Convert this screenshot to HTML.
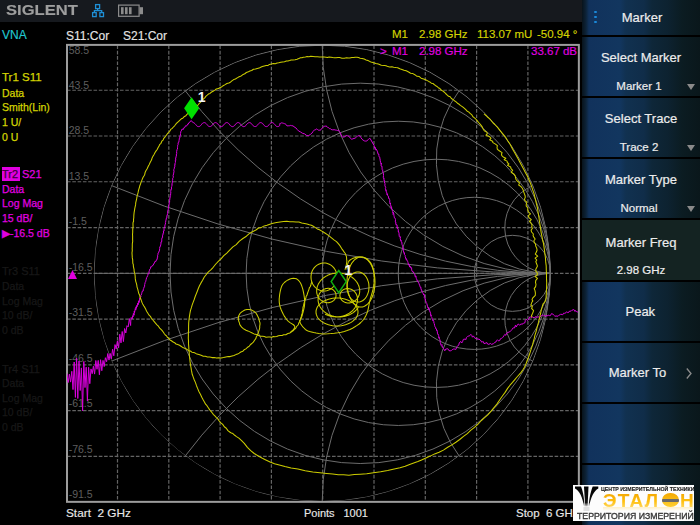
<!DOCTYPE html>
<html><head><meta charset="utf-8">
<style>
html,body{margin:0;padding:0;width:700px;height:525px;overflow:hidden;background:#000;}
body{position:relative;font-family:"Liberation Sans",sans-serif;}
.a{position:absolute;white-space:nowrap;line-height:1;-webkit-text-stroke:0.15px currentColor;}
#top{position:absolute;left:0;top:0;width:582px;height:22px;background:#16191e;}
#panel{position:absolute;left:582px;top:0;width:118px;height:525px;background:#000;}
.btn{position:absolute;left:0;width:118px;background:linear-gradient(to right,#08131b 0px,#0d2338 4px,#11325c 7px,#12365f 38px,#113150 44px,#102d49 62px,#0e2739 70px,#0d2230 86px,#0b1c22 100px,#0a171b 118px);}
.btn.sel{background:#142322;}
.bt{position:absolute;left:0;width:118px;text-align:center;color:#ececec;font-size:13px;line-height:1;-webkit-text-stroke:0.2px #ececec;}
.bs{position:absolute;left:0;width:118px;text-align:center;color:#ececec;font-size:11.5px;line-height:1;-webkit-text-stroke:0.2px #ececec;}
.tri{position:absolute;left:105px;width:0;height:0;border-left:4px solid transparent;border-right:4px solid transparent;border-top:6px solid #8a8a8a;}
.lab{position:absolute;left:2px;font-size:10.5px;line-height:1;white-space:nowrap;-webkit-text-stroke:0.25px currentColor;}
.ax{position:absolute;left:68.7px;font-size:10.5px;color:#5e5e5e;line-height:1;}
</style></head><body>
<div id="top"></div>
<div class="a" style="left:5.5px;top:3px;font-size:14.8px;font-weight:bold;color:#9e9e9e;transform:scaleX(1.12);transform-origin:0 0;">SIGLENT</div>
<svg style="position:absolute;left:0;top:0" width="160" height="22">
 <g fill="none" stroke="#1e8fd6" stroke-width="1.3">
  <rect x="95.6" y="4.6" width="4" height="4"/>
  <rect x="92.6" y="12.6" width="3.6" height="4"/>
  <rect x="99.9" y="12.6" width="3.6" height="4"/>
  <path d="M97.6 8.6 V10.6 M94.4 12.6 V10.6 H101.7 V12.6"/>
 </g>
 <g fill="none" stroke="#8c8c8c" stroke-width="1.2"><rect x="118.6" y="5.1" width="20.5" height="11.2"/></g>
 <g fill="#8c8c8c"><rect x="121" y="7.2" width="2.6" height="7"/><rect x="125" y="7.2" width="2.6" height="7"/><rect x="129" y="7.2" width="2.6" height="7"/><rect x="139.5" y="7.2" width="3.5" height="7"/></g>
</svg>

<div class="a" style="left:2px;top:29px;font-size:12px;color:#20c8d0;">VNA</div>
<div class="a" style="left:66px;top:30px;font-size:12px;color:#e4e4e4;">S11:Cor</div>
<div class="a" style="left:123px;top:30px;font-size:12px;color:#e4e4e4;">S21:Cor</div>

<div class="a" style="left:392px;top:29px;font-size:11.5px;color:#d4d400;">M1</div>
<div class="a" style="left:419px;top:29px;font-size:11.5px;color:#d4d400;">2.98 GHz</div>
<div class="a" style="left:477px;top:29px;font-size:11.5px;color:#d4d400;">113.07 mU</div>
<div class="a" style="left:537px;top:29px;font-size:11.5px;color:#d4d400;">-50.94 °</div>

<!-- left labels -->
<div class="lab" style="top:72px;font-size:11.5px;color:#d4d400;">Tr1 S11</div>
<div class="lab" style="top:88px;color:#d4d400;">Data</div>
<div class="lab" style="top:102px;color:#d4d400;">Smith(Lin)</div>
<div class="lab" style="top:117px;color:#d4d400;">1 U/</div>
<div class="lab" style="top:132px;color:#d4d400;">0 U</div>

<div style="position:absolute;left:2px;top:167px;width:18px;height:14px;background:#e000e0;"></div>
<div class="lab" style="top:169px;font-size:11px;color:#3a003a;">Tr2</div>
<div class="lab" style="left:22px;top:169px;font-size:11px;color:#e000e0;">S21</div>
<div class="lab" style="top:184px;color:#e000e0;">Data</div>
<div class="lab" style="top:198px;color:#e000e0;">Log Mag</div>
<div class="lab" style="top:213px;color:#e000e0;">15 dB/</div>
<div class="lab" style="top:228px;color:#e000e0;">&#9654;-16.5 dB</div>

<div class="lab" style="top:266px;font-size:11px;color:#171717;">Tr3 S11</div>
<div class="lab" style="top:281px;color:#171717;">Data</div>
<div class="lab" style="top:296px;color:#171717;">Log Mag</div>
<div class="lab" style="top:310px;color:#171717;">10 dB/</div>
<div class="lab" style="top:325px;color:#171717;">0 dB</div>

<div class="lab" style="top:364px;font-size:11px;color:#171717;">Tr4 S11</div>
<div class="lab" style="top:378px;color:#171717;">Data</div>
<div class="lab" style="top:393px;color:#171717;">Log Mag</div>
<div class="lab" style="top:407px;color:#171717;">10 dB/</div>
<div class="lab" style="top:422px;color:#171717;">0 dB</div>

<!-- axis labels -->
<div class="ax" style="top:44.8px;">58.5</div>
<div class="ax" style="top:79.8px;">43.5</div>
<div class="ax" style="top:124.8px;">28.5</div>
<div class="ax" style="top:170.8px;">13.5</div>
<div class="ax" style="top:215.8px;">-1.5</div>
<div class="ax" style="top:261.8px;">-16.5</div>
<div class="ax" style="top:306.8px;">-31.5</div>
<div class="ax" style="top:352.8px;">-46.5</div>
<div class="ax" style="top:397.8px;">-61.5</div>
<div class="ax" style="top:443.8px;">-76.5</div>
<div class="ax" style="top:488.8px;">-91.5</div>

<svg style="position:absolute;left:0;top:0" width="582" height="525">
 <defs><clipPath id="uc"><circle cx="322.5" cy="273" r="228.5"/></clipPath>
 <clipPath id="gb"><rect x="67" y="45" width="511" height="456"/></clipPath></defs>
 <g stroke="#646464" stroke-width="1.2" stroke-dasharray="3.6 1.7" fill="none">
<line x1="117.50" y1="45.5" x2="117.50" y2="501.0"/>
<line x1="168.80" y1="45.5" x2="168.80" y2="501.0"/>
<line x1="220.10" y1="45.5" x2="220.10" y2="501.0"/>
<line x1="271.40" y1="45.5" x2="271.40" y2="501.0"/>
<line x1="322.70" y1="45.5" x2="322.70" y2="501.0"/>
<line x1="374.00" y1="45.5" x2="374.00" y2="501.0"/>
<line x1="425.30" y1="45.5" x2="425.30" y2="501.0"/>
<line x1="476.60" y1="45.5" x2="476.60" y2="501.0"/>
<line x1="527.90" y1="45.5" x2="527.90" y2="501.0"/>
<line x1="67.0" y1="90.23" x2="578.0" y2="90.23"/>
<line x1="67.0" y1="136.00" x2="578.0" y2="136.00"/>
<line x1="67.0" y1="181.77" x2="578.0" y2="181.77"/>
<line x1="67.0" y1="227.54" x2="578.0" y2="227.54"/>
<line x1="67.0" y1="273.31" x2="578.0" y2="273.31"/>
<line x1="67.0" y1="319.08" x2="578.0" y2="319.08"/>
<line x1="67.0" y1="364.85" x2="578.0" y2="364.85"/>
<line x1="67.0" y1="410.62" x2="578.0" y2="410.62"/>
<line x1="67.0" y1="456.39" x2="578.0" y2="456.39"/>
 </g>
 <g stroke="#6c6c6c" stroke-width="1" fill="none" clip-path="url(#uc)">
<circle cx="322.2" cy="273.35" r="228.2"/>
<circle cx="360.23" cy="273.35" r="190.17"/>
<circle cx="398.27" cy="273.35" r="152.13"/>
<circle cx="436.30" cy="273.35" r="114.10"/>
<circle cx="474.33" cy="273.35" r="76.07"/>
<circle cx="512.37" cy="273.35" r="38.03"/>
<line x1="94.0" y1="273.35" x2="550.4" y2="273.35"/>
<path d="M550.4 273.35 A1141.00 1141.00 0 0 1 111.55 185.58"/>
<path d="M550.4 273.35 A1141.00 1141.00 0 0 0 111.55 361.12"/>
<path d="M550.4 273.35 A456.40 456.40 0 0 1 185.28 90.79"/>
<path d="M550.4 273.35 A456.40 456.40 0 0 0 185.28 455.91"/>
<path d="M550.4 273.35 A228.20 228.20 0 0 1 322.20 45.15"/>
<path d="M550.4 273.35 A228.20 228.20 0 0 0 322.20 501.55"/>
<path d="M550.4 273.35 A114.10 114.10 0 0 1 459.12 90.79"/>
<path d="M550.4 273.35 A114.10 114.10 0 0 0 459.12 455.91"/>
<path d="M550.4 273.35 A45.64 45.64 0 0 1 532.85 185.58"/>
<path d="M550.4 273.35 A45.64 45.64 0 0 0 532.85 361.12"/>
 </g>
 
 <rect x="67" y="44.9" width="511.85" height="456.95" fill="none" stroke="#9c9c9c" stroke-width="2"/>
 <g clip-path="url(#gb)" fill="none" stroke-linejoin="round">
<path d="M67.0 373.5 L68.2 382.5 L69.4 374.1 L70.6 382.1 L71.8 371.3 L73.0 389.6 L74.2 362.0 L75.4 397.4 L76.6 358.1 L77.8 398.5 L79.0 361.0 L80.2 390.5 L81.4 367.9 L82.6 410.9 L83.8 361.5 L85.0 387.6 L86.2 367.2 L87.4 401.0 L88.6 367.3 L89.8 383.7 L91.0 368.9 L92.2 373.7 L93.4 366.2 L94.6 374.1 L95.8 360.5 L97.0 369.3 L98.2 360.4 L99.4 374.8 L100.6 359.7 L101.8 370.7 L103.0 360.4 L104.2 366.6 L105.4 357.7 L106.6 361.7 L107.8 353.5 L109.0 360.1 L110.2 353.4 L111.4 358.8 L112.6 349.2 L113.8 355.8 L115.0 344.6 L116.2 349.1 L117.4 340.9 L118.6 347.8 L119.8 334.2 L121.0 342.9 L122.2 331.5 L123.4 341.6 L124.6 328.5 L125.8 333.0 L127.0 325.7 L128.2 326.9 L129.4 318.6 L130.6 325.5 L130.8 321.2 L131.2 317.5 L132.2 319.0 L132.7 315.7 L133.1 316.8 L133.4 313.4 L134.1 315.2 L134.3 311.0 L134.5 312.8 L135.3 308.5 L135.8 310.1 L136.0 306.8 L136.3 308.3 L136.8 305.4 L137.2 306.6 L137.7 303.1 L138.3 304.6 L138.5 300.8 L139.2 302.5 L139.7 298.2 L139.8 299.8 L140.2 297.1 L140.9 297.0 L140.8 295.3 L141.2 295.0 L141.8 293.2 L141.8 292.9 L142.4 291.0 L143.2 291.0 L143.3 288.9 L143.7 288.6 L144.2 286.7 L144.6 286.7 L144.6 284.6 L144.8 284.3 L145.2 282.4 L145.6 281.8 L146.0 280.1 L146.2 279.4 L146.6 277.6 L146.9 277.4 L147.7 275.5 L147.8 275.1 L148.3 273.4 L149.0 273.3 L149.1 271.1 L149.3 270.8 L149.8 269.1 L150.5 268.7 L150.7 266.8 L151.7 266.8 L152.4 265.4 L153.1 265.4 L154.0 263.2 L154.4 263.2 L155.0 261.3 L155.9 261.5 L156.5 259.7 L157.1 259.6 L157.4 257.2 L157.7 257.3 L157.6 255.2 L157.9 254.8 L158.0 253.1 L158.5 252.9 L159.2 250.9 L159.4 250.9 L159.7 248.7 L159.6 248.4 L159.9 246.6 L160.4 246.5 L160.8 244.3 L161.0 244.3 L160.9 242.1 L161.6 242.1 L161.8 240.0 L161.7 239.9 L162.0 237.6 L162.6 237.5 L162.5 235.3 L163.0 235.2 L162.9 233.5 L163.6 233.3 L163.4 231.0 L164.1 231.0 L164.0 228.9 L164.1 228.5 L164.8 226.7 L164.8 226.8 L165.0 224.4 L165.5 224.2 L165.4 222.4 L165.6 222.2 L165.9 220.2 L166.0 220.2 L166.4 218.0 L166.8 218.0 L166.9 215.5 L167.2 215.6 L167.5 213.8 L167.7 213.2 L167.6 211.2 L167.8 211.1 L168.3 209.1 L168.3 208.9 L168.6 206.8 L168.5 206.7 L168.7 204.8 L169.2 204.5 L169.2 202.4 L169.6 202.3 L169.6 200.3 L169.7 200.2 L169.9 198.0 L170.0 198.1 L170.3 195.7 L170.6 195.5 L170.6 193.4 L170.9 193.3 L170.7 191.5 L170.8 191.1 L171.0 189.1 L171.6 189.2 L171.4 186.9 L171.8 186.6 L172.1 184.6 L171.9 184.8 L172.2 182.6 L172.7 182.5 L172.4 180.4 L172.7 180.1 L172.7 178.2 L173.2 177.7 L173.3 176.0 L173.1 175.7 L173.6 173.7 L173.5 173.8 L174.1 171.3 L173.8 171.2 L173.9 169.2 L174.2 168.9 L174.5 166.9 L174.9 166.8 L174.7 164.7 L175.1 164.8 L175.0 162.9 L175.5 162.4 L175.3 160.2 L175.8 160.4 L175.6 158.1 L175.8 158.2 L176.2 156.1 L176.4 156.0 L176.4 154.0 L176.7 153.5 L176.6 151.8 L176.7 151.2 L177.1 149.5 L177.5 149.1 L177.5 147.3 L177.6 146.7 L177.7 145.2 L178.1 144.8 L178.1 142.7 L178.8 142.3 L179.0 140.5 L179.1 140.4 L179.4 138.1 L179.8 138.1 L179.9 135.7 L180.4 135.7 L180.5 133.6 L180.6 133.2 L180.9 131.2 L181.3 130.9 L182.0 129.1 L183.4 129.4 L183.9 127.7 L184.7 127.6 L185.5 125.8 L186.5 126.1 L187.7 124.1 L188.1 124.4 L189.0 122.5 L189.7 122.4 L190.8 120.7 L191.5 120.8 L192.9 122.6 L193.6 122.7 L194.3 123.1 L195.0 123.7 L195.7 124.5 L196.4 125.5 L197.1 126.1 L197.8 126.5 L198.5 126.6 L199.2 126.5 L199.9 126.2 L200.6 125.6 L201.3 124.8 L202.0 123.8 L202.7 123.1 L203.4 122.8 L204.1 122.6 L204.8 122.7 L205.5 123.0 L206.2 123.6 L206.9 124.4 L207.6 125.4 L208.3 126.0 L209.0 126.4 L209.7 126.6 L210.4 126.5 L211.1 126.2 L211.8 125.7 L212.5 124.9 L213.2 123.9 L213.9 123.2 L214.6 122.8 L215.3 122.6 L216.0 122.7 L216.7 123.0 L217.4 123.5 L218.1 124.2 L218.8 125.3 L219.5 125.9 L220.2 126.4 L220.9 126.6 L221.6 126.6 L222.3 126.3 L223.0 125.8 L223.7 125.0 L224.4 124.0 L225.1 123.3 L225.8 122.8 L226.5 122.6 L227.2 122.6 L227.9 122.9 L228.6 123.4 L229.3 124.1 L230.0 125.2 L230.7 125.9 L231.4 126.3 L232.1 126.6 L232.8 126.6 L233.5 126.3 L234.2 125.9 L234.9 125.2 L235.6 124.1 L236.3 123.4 L237.0 122.9 L237.7 122.6 L238.4 122.6 L239.1 122.8 L239.8 123.3 L240.5 124.0 L241.2 125.0 L241.9 125.8 L242.6 126.3 L243.3 126.6 L244.0 126.6 L244.7 126.4 L245.4 125.9 L246.1 125.3 L246.8 124.2 L247.5 123.5 L248.2 123.0 L248.9 122.7 L249.6 122.6 L250.3 122.8 L251.0 123.2 L251.7 123.9 L252.4 124.9 L253.1 125.7 L253.8 126.2 L254.5 126.5 L255.2 126.6 L255.9 126.4 L256.6 126.0 L257.3 125.4 L258.0 124.4 L258.7 123.6 L259.4 123.0 L260.1 122.7 L260.8 122.6 L261.5 122.8 L262.2 123.1 L262.9 123.8 L263.6 124.8 L264.3 125.6 L265.0 126.2 L265.7 126.5 L266.4 126.6 L267.1 126.5 L267.8 126.1 L268.5 125.5 L269.2 124.5 L269.9 123.7 L270.6 123.1 L271.3 122.7 L272.0 122.6 L272.7 122.7 L273.4 123.1 L274.1 123.7 L274.8 124.5 L275.5 125.5 L276.2 126.1 L276.9 126.5 L277.6 126.6 L278.3 126.5 L279.0 126.2 L279.7 125.6 L279.9 123.4 L280.5 123.4 L281.3 122.9 L282.4 123.0 L283.5 123.3 L284.4 123.6 L285.0 124.1 L285.4 124.0 L286.0 124.4 L286.4 125.4 L287.0 125.9 L288.2 125.8 L289.3 125.8 L290.3 125.4 L291.7 125.7 L293.0 125.9 L294.0 126.7 L295.0 127.4 L295.9 127.9 L297.1 129.4 L298.5 130.9 L300.4 131.9 L302.5 133.3 L304.6 133.9 L306.8 135.6 L308.6 135.6 L310.3 134.5 L311.9 133.2 L313.1 131.4 L314.6 129.8 L315.8 129.6 L316.7 128.9 L317.6 129.6 L318.5 130.2 L319.2 130.1 L319.9 130.4 L320.9 129.8 L321.7 128.5 L322.4 127.7 L323.5 127.1 L324.4 126.1 L325.2 126.2 L326.0 126.0 L327.0 126.5 L327.9 127.7 L328.5 127.7 L329.5 128.6 L330.2 128.4 L331.0 129.5 L331.9 129.6 L332.8 129.9 L334.1 129.7 L335.2 130.0 L336.5 130.2 L337.4 130.5 L338.6 130.1 L339.4 131.6 L340.4 132.9 L341.1 134.6 L342.0 136.5 L342.8 137.3 L343.8 136.8 L344.6 137.0 L345.4 136.0 L346.1 135.6 L347.2 135.7 L348.1 136.0 L349.2 136.5 L350.4 138.3 L351.7 139.2 L352.8 138.9 L354.0 138.4 L355.1 138.2 L356.4 137.0 L357.5 136.2 L358.7 135.6 L359.8 135.8 L360.9 137.6 L362.1 139.3 L363.1 140.1 L364.4 140.9 L365.5 141.1 L366.8 140.9 L368.3 139.5 L369.3 138.7 L370.0 138.3 L374.1 145.5 L374.6 148.2 L375.3 147.4 L376.0 150.2 L376.2 149.0 L376.5 149.8 L377.1 150.7 L377.5 151.9 L378.2 154.3 L378.8 154.1 L378.8 155.4 L379.0 155.9 L379.0 156.8 L379.9 157.4 L379.9 159.6 L380.4 159.7 L380.2 160.7 L380.6 162.2 L381.2 164.2 L381.4 163.2 L381.0 165.9 L381.9 166.3 L382.0 166.2 L382.1 169.4 L382.6 170.2 L383.0 169.8 L382.6 170.6 L383.1 172.9 L383.5 174.0 L383.5 175.1 L383.5 175.7 L383.3 177.2 L383.6 178.6 L384.1 178.2 L383.9 179.1 L384.4 181.2 L384.2 180.7 L384.6 183.0 L384.7 183.1 L385.0 183.7 L384.9 185.8 L385.6 187.2 L385.7 187.9 L385.4 188.4 L386.0 190.5 L385.9 189.8 L386.4 192.4 L386.7 192.3 L387.2 194.9 L387.3 193.8 L387.7 195.7 L388.3 196.1 L388.7 198.4 L388.9 198.1 L389.5 199.3 L389.8 200.1 L389.7 202.3 L390.0 203.8 L390.5 202.9 L390.5 204.4 L391.1 206.7 L391.0 206.3 L391.4 208.7 L391.6 207.4 L391.8 209.2 L392.7 211.4 L392.8 212.6 L393.3 212.0 L393.0 214.4 L393.7 213.2 L393.9 215.0 L394.0 215.9 L394.1 216.1 L394.4 217.9 L395.2 218.3 L395.5 219.5 L395.3 221.9 L395.9 222.0 L395.7 223.0 L396.2 225.1 L396.3 224.7 L397.1 224.9 L397.0 227.7 L397.6 226.9 L397.3 227.9 L398.2 229.4 L398.4 231.9 L398.4 231.4 L399.1 233.2 L398.9 234.4 L399.2 234.4 L399.2 236.5 L400.2 237.2 L400.5 236.7 L400.2 238.8 L401.0 240.9 L400.9 240.2 L401.2 241.8 L401.8 242.0 L402.0 244.4 L402.3 245.4 L402.4 245.4 L402.5 246.4 L403.1 246.7 L402.9 249.3 L403.3 248.7 L403.4 250.8 L403.9 252.8 L404.5 253.9 L404.4 252.7 L404.5 254.7 L405.2 255.5 L405.2 256.4 L405.7 258.0 L406.1 259.4 L406.3 258.7 L406.9 260.0 L407.2 261.1 L407.9 261.6 L408.0 262.6 L408.5 265.0 L409.3 264.6 L409.6 267.1 L410.2 266.2 L410.9 268.1 L411.6 267.7 L411.7 270.3 L412.4 271.5 L412.4 270.9 L412.9 271.5 L414.0 273.4 L414.5 273.8 L415.0 274.9 L415.0 276.6 L416.0 275.9 L416.1 278.1 L416.3 278.4 L416.7 279.0 L417.2 280.9 L417.9 280.9 L417.9 282.1 L418.8 282.7 L419.0 283.7 L419.7 285.5 L419.7 285.4 L420.3 287.4 L420.9 287.2 L421.0 289.6 L421.6 289.6 L422.0 292.1 L422.4 292.2 L422.9 292.8 L423.7 295.1 L423.8 294.1 L424.5 295.1 L424.3 297.7 L424.9 298.5 L425.2 299.6 L425.5 298.8 L425.5 300.7 L426.3 302.5 L426.2 302.7 L426.7 303.4 L426.9 303.8 L427.5 306.3 L427.5 306.2 L428.3 308.3 L428.2 307.3 L429.1 310.2 L429.0 309.0 L429.7 310.7 L430.0 312.2 L430.2 312.1 L430.6 313.2 L430.6 315.6 L431.3 315.0 L431.2 316.5 L431.8 317.4 L431.9 318.0 L432.7 320.5 L432.5 320.6 L433.4 320.3 L433.8 321.5 L434.0 323.5 L434.4 323.8 L434.6 325.5 L435.0 326.7 L435.5 327.2 L435.6 328.6 L436.3 328.7 L436.9 331.1 L437.1 330.6 L437.4 331.5 L437.4 333.2 L437.7 334.3 L438.3 334.3 L438.6 335.4 L439.0 338.1 L439.1 337.3 L439.4 339.1 L440.0 339.5 L440.3 342.6 L440.6 343.1 L440.6 344.5 L441.2 345.4 L441.9 344.4 L442.2 347.2 L442.1 346.8 L443.0 347.3 L443.5 348.5 L443.8 349.1 L444.8 350.8 L445.7 349.0 L447.1 348.9 L447.8 348.7 L449.0 350.7 L450.5 350.8 L451.2 350.7 L452.2 349.7 L453.6 349.0 L454.9 349.1 L455.8 349.5 L456.0 349.0 L457.0 346.7 L457.8 345.6 L458.5 345.5 L458.7 345.2 L459.3 342.9 L460.2 341.8 L461.1 341.7 L461.8 342.9 L462.6 341.6 L463.3 339.4 L464.0 339.2 L465.2 339.2 L465.9 339.7 L466.4 337.5 L467.6 336.4 L467.9 336.5 L468.8 335.9 L469.7 335.8 L470.8 334.3 L471.8 335.5 L472.4 337.2 L473.5 335.9 L474.4 337.7 L476.0 338.6 L476.7 337.9 L477.5 339.3 L479.0 339.1 L480.1 339.9 L481.2 341.1 L481.5 342.1 L482.3 341.8 L483.4 341.7 L484.0 343.6 L485.1 343.3 L486.9 342.6 L487.5 344.0 L488.9 344.4 L490.2 343.5 L490.8 343.5 L491.6 344.5 L493.1 343.7 L493.4 343.7 L494.9 342.4 L495.9 342.0 L496.5 340.6 L497.4 339.8 L498.4 340.9 L499.6 340.6 L500.6 338.6 L501.4 338.4 L502.3 337.9 L502.7 337.5 L503.9 335.8 L504.6 334.6 L504.8 334.4 L505.9 335.3 L506.6 333.1 L507.4 332.4 L507.7 333.1 L508.7 331.9 L509.6 331.9 L510.4 331.0 L511.4 330.4 L512.1 329.4 L513.1 327.8 L513.7 327.9 L514.5 328.0 L515.4 325.3 L516.3 327.0 L517.4 324.7 L518.1 324.0 L519.4 325.0 L520.3 324.8 L520.8 324.0 L521.9 324.1 L523.1 323.8 L523.5 323.2 L525.0 322.7 L525.3 320.3 L526.2 319.3 L527.6 320.5 L528.3 319.9 L529.2 318.0 L529.7 316.9 L531.2 317.1 L531.9 317.5 L532.8 316.9 L534.0 317.9 L535.1 316.8 L536.5 317.1 L537.5 317.3 L537.9 316.6 L539.3 317.4 L540.2 317.0 L541.3 315.7 L542.6 315.2 L543.5 315.2 L543.9 315.1 L545.5 316.8 L545.9 315.5 L547.3 316.0 L548.2 315.0 L549.3 315.6 L550.4 315.6 L551.5 313.6 L552.8 314.0 L553.5 314.9 L554.5 315.8 L556.0 316.3 L557.0 315.8 L557.9 316.4 L559.2 315.1 L560.2 314.4 L560.7 314.4 L562.1 314.4 L562.7 314.8 L563.6 313.2 L564.7 313.3 L565.9 312.8 L566.7 311.7 L567.6 312.6 L569.0 312.1 L569.6 311.1 L571.1 311.1 L571.7 310.5 L573.2 309.7 L573.8 309.5 L575.0 311.5 L575.5 310.5 L576.5 311.6 L577.5 311.9 L578.3 312.6 L579.6 314.5" stroke="#d800dc" stroke-width="1"/>
<path d="M483.9 114.0 L484.5 114.2 L485.5 115.2 L486.4 115.8 L487.4 117.0 L488.8 118.1 L490.5 119.7 L492.5 122.3 L494.8 124.5 L497.4 127.2 L499.9 130.3 L502.6 133.6 L505.3 136.8 L507.7 140.7 L510.2 144.5 L512.8 149.4 L515.3 153.7 L517.7 158.1 L519.8 162.0 L521.8 165.8 L523.7 169.3 L525.6 172.9 L527.3 176.0 L528.8 179.5 L530.3 182.9 L531.7 186.7 L532.7 189.9 L533.9 193.1 L534.8 196.9 L535.6 200.1 L536.5 204.1 L537.5 208.0 L538.1 212.5 L538.9 217.2 L539.5 221.7 L540.2 226.0 L540.8 230.3 L541.4 233.8 L542.1 237.2 L542.7 240.5 L543.4 243.0 L543.9 246.4 L544.4 249.9 L544.9 253.9 L545.4 257.5 L545.7 261.9 L546.2 265.9 L546.3 270.2 L546.5 273.8 L546.5 278.4 L546.7 282.7 L546.6 287.1 L546.4 291.6 L546.2 295.1 L546.1 298.2 L545.6 300.0 L545.1 301.2 L544.6 302.2 L544.0 302.9 L543.2 303.7 L542.7 305.0 L542.1 307.1 L541.6 308.6 L541.1 310.8 L540.7 313.0 L540.2 315.0 L539.7 317.6 L538.9 320.0 L538.5 322.4 L537.8 324.9 L537.2 326.9 L536.4 330.3 L535.8 332.5 L534.9 335.3 L534.2 338.7 L533.4 341.4 L532.6 344.9 L531.5 348.1 L530.5 351.2 L529.5 354.4 L528.4 357.7 L527.1 360.8 L525.9 364.1 L524.5 367.3 L522.9 369.8 L521.1 372.4 L519.1 374.7 L517.0 377.0 L514.8 379.6 L512.5 382.4 L510.0 385.2 L507.6 388.4 L505.1 392.4 L502.4 396.0 L499.8 399.8 L496.9 404.1 L493.8 407.8 L490.9 411.4 L487.8 414.8 L484.6 417.7 L481.4 420.5 L478.0 424.1 L474.5 427.4 L470.9 430.2 L467.3 433.6 L463.5 436.4 L459.7 439.5 L455.9 442.2 L451.9 444.9 L447.7 447.3 L443.4 450.1 L439.1 452.2 L434.6 453.9 L430.2 456.1 L425.9 458.1 L421.6 459.9 L417.9 461.5 L413.7 463.0 L409.6 464.5 L405.2 466.3 L400.0 467.8 L394.2 469.1 L387.6 470.5 L380.6 471.8 L373.6 472.7 L366.7 473.8 L360.3 474.2 L354.3 474.5 L348.9 475.3 L343.6 474.8 L338.3 474.8 L332.7 474.0 L326.7 473.5 L320.0 472.8 L312.8 472.1 L305.2 470.7 L297.9 469.1 L291.1 468.0 L284.9 466.5 L279.3 465.0 L274.5 463.8 L270.1 461.9 L265.8 459.9 L261.9 458.0 L257.9 455.7 L254.2 453.5 L250.7 450.6 L247.4 447.3 L244.3 443.4 L241.6 440.6 L238.9 438.1 L236.5 436.6 L234.7 435.3 L232.9 433.6 L231.3 433.0 L229.7 432.0 L227.9 430.6 L226.3 428.2 L224.3 426.8 L222.7 424.4 L220.9 422.8 L219.2 421.0 L217.7 418.6 L216.2 417.3 L214.9 415.9 L213.5 414.6 L212.3 413.0 L211.0 411.4 L209.7 409.9 L208.5 408.0 L207.0 405.7 L205.6 404.2 L204.4 401.9 L203.0 399.5 L201.8 397.2 L200.4 394.2 L199.0 391.7 L197.7 388.6 L196.5 385.7 L195.4 382.4 L194.2 379.8 L193.5 377.9 L192.9 376.2 L192.2 374.3 L191.9 372.6 L191.4 370.2 L191.1 368.2 L190.6 365.5 L190.1 361.9 L189.8 359.1 L189.4 355.7 L189.2 352.1 L188.9 349.3 L188.7 346.1 L188.5 343.7 L188.5 340.8 L188.3 338.3 L188.4 335.1 L188.4 332.7 L188.6 329.4 L188.6 326.2 L188.7 322.7 L189.0 319.9 L189.4 316.6 L189.9 313.5 L190.5 310.3 L191.4 307.7 L192.1 305.1 L193.2 302.1 L194.2 299.5 L195.2 296.5 L196.1 294.3 L197.3 291.2 L198.4 288.2 L199.6 285.5 L201.0 282.9 L202.6 280.3 L204.3 277.0 L206.3 274.5 L208.4 271.9 L210.8 269.9 L213.2 267.3 L215.8 264.0 L218.3 261.4 L221.0 258.9 L223.8 255.7 L226.8 253.1 L229.9 249.8 L232.9 246.9 L236.2 244.6 L239.4 241.1 L242.9 238.5 L246.4 236.2 L249.8 233.2 L253.0 231.5 L255.9 230.0 L258.6 228.0 L261.5 227.4 L264.2 225.9 L267.0 225.3 L269.9 224.2 L273.1 223.2 L276.6 222.6 L280.0 222.0 L283.5 221.5 L286.9 221.3 L289.9 221.7 L293.0 221.8 L296.1 222.0 L298.9 222.1 L301.7 223.0 L304.5 223.4 L307.0 223.9 L309.4 224.7 L311.4 225.3 L313.3 226.2 L315.4 227.6 L317.3 228.9 L319.5 229.8 L321.8 231.1 L324.5 232.7 L327.0 234.4 L329.7 236.4 L332.1 238.3 L334.3 240.1 L336.5 241.6 L338.3 243.7 L340.1 245.9 L341.7 248.6 L343.2 250.6 L344.2 252.1 L345.3 253.5 L345.9 255.2 L346.4 256.4 L346.6 258.0 L346.6 259.1 L346.9 260.9 L346.7 262.5 L346.5 264.0 L346.1 265.7 L345.6 267.8 L345.3 268.8 L344.9 269.7" stroke="#cccc00" stroke-width="1.05"/><path d="M312.1 282.0 L311.2 283.4 L310.8 285.3 L310.2 286.7 L309.3 287.9 L308.9 289.6 L308.3 291.1 L307.6 293.0 L307.0 295.1 L306.2 296.2 L305.8 298.3 L305.2 299.8 L304.4 302.0 L304.0 303.3 L303.6 305.4 L303.0 307.3 L302.9 309.2 L302.3 311.3 L302.3 313.3 L301.6 315.0 L301.2 316.9 L300.5 318.6 L300.5 319.9 L299.7 321.5 L298.8 323.0 L298.1 325.0 L296.6 326.5 L295.6 328.5 L294.3 329.3 L293.4 330.6 L291.4 331.9 L290.0 332.9 L287.9 333.5 L285.8 334.7 L283.6 334.7 L282.1 335.4 L280.2 335.6 L278.4 335.8 L276.7 336.6 L274.7 336.7 L273.4 336.5 L271.8 337.2 L269.9 336.9 L268.2 337.0 L266.0 337.2 L264.4 336.5 L262.4 336.2 L260.8 336.2 L259.3 335.7 L257.6 335.1 L255.5 334.3 L254.0 333.9 L251.7 332.8 L249.9 331.9 L247.8 330.9 L246.0 330.2 L243.9 329.0 L243.0 328.3 L241.6 327.1 L239.8 324.6 L239.3 322.5 L238.7 321.1 L238.3 318.1 L238.6 316.0 L240.0 313.4 L242.1 311.6 L244.8 310.0 L246.9 309.5 L249.1 309.5 L251.8 310.1 L253.7 311.2 L255.7 312.7 L257.1 314.9 L258.6 317.9 L259.0 319.3 L259.4 321.1 L260.0 322.8 L260.0 324.4 L259.7 326.2 L259.7 327.8 L259.3 329.6 L258.7 331.3 L258.0 333.3 L257.4 335.2 L256.3 336.8 L255.9 338.4 L254.6 340.2 L253.3 342.1 L251.9 343.5 L250.5 344.5 L249.3 346.1 L247.3 347.5 L245.9 348.9 L244.1 349.8 L242.9 351.2 L240.8 352.0 L239.2 353.1 L237.6 354.1 L235.9 354.6 L234.0 355.5 L232.1 355.9 L230.1 356.6 L228.1 356.6 L225.9 356.9 L223.5 357.6 L221.1 358.0 L218.8 357.7 L216.6 358.1 L214.2 357.6 L211.9 357.6 L209.8 357.1 L207.5 357.0 L205.3 356.3 L203.3 356.2 L201.1 355.3 L198.9 354.6 L196.9 354.1 L195.2 353.1 L193.7 352.6 L191.9 352.2 L190.4 351.0 L188.6 350.7 L186.9 349.3 L185.7 348.8 L184.3 348.1 L182.6 347.4 L181.0 346.3 L179.5 345.3 L177.7 344.6 L176.0 344.0 L174.6 342.7 L172.7 341.7 L171.4 340.8 L170.0 340.0 L169.0 338.5 L167.5 337.4 L166.6 335.9 L165.3 335.0 L164.0 333.3 L163.4 332.3 L162.0 330.4 L161.0 329.3 L159.7 328.1 L158.4 326.2 L156.7 324.6 L155.5 323.2 L154.0 321.3 L152.9 320.0 L151.5 318.6 L150.4 316.3 L149.1 315.1 L147.9 313.3 L146.6 311.2 L145.9 309.6 L144.8 307.4 L143.7 305.8 L142.7 303.9 L141.9 302.2 L141.1 299.8 L140.1 297.5 L139.7 295.3 L138.7 293.2 L138.3 291.5 L137.8 289.3 L137.0 286.8 L136.8 285.1 L136.4 283.4 L135.8 281.6 L135.3 278.9 L135.1 275.5 L134.6 272.5 L134.1 271.3 L134.1 269.7 L133.7 267.9 L133.3 265.9 L133.4 264.9 L132.8 263.3 L132.7 259.9 L132.3 257.9 L132.2 256.0 L132.0 253.0 L132.3 250.6 L132.2 248.9 L132.3 247.0 L132.3 244.8 L132.4 243.1 L132.7 241.4 L132.6 239.4 L132.6 237.8 L132.6 235.8 L132.5 234.5 L132.7 232.3 L132.7 230.5 L132.8 228.4 L133.1 226.7 L133.0 225.1 L133.0 222.8 L133.6 221.0 L133.5 219.8 L133.8 217.5 L133.8 216.2 L133.9 214.6 L134.1 212.7 L134.5 210.3 L134.8 208.3 L135.2 206.5 L135.6 204.9 L135.7 202.9 L136.1 201.1 L136.6 199.2 L136.8 197.8 L137.1 196.2 L137.6 194.4 L138.1 192.4 L138.5 190.5 L138.8 189.4 L139.4 187.5 L139.8 185.7 L140.5 184.0 L141.1 182.0 L141.8 180.4 L142.3 179.1 L143.1 177.2 L144.1 175.8 L144.8 174.2 L145.2 172.2 L145.9 170.8 L147.0 169.0 L147.6 167.7 L148.5 165.8 L149.3 164.4 L150.0 162.8 L150.5 161.8 L151.5 160.1 L152.1 157.9 L153.1 156.1 L154.1 154.4 L154.9 152.7 L156.1 150.9 L157.2 149.5 L158.0 147.7 L158.9 146.4 L159.8 144.3 L161.0 143.3 L161.8 141.2 L163.1 140.1 L163.8 138.3 L164.9 137.2 L166.0 135.7 L167.4 133.7 L168.5 132.5 L169.7 131.3 L170.7 129.4 L172.2 128.3 L173.4 127.0 L174.6 125.8 L175.8 124.2 L176.8 123.0 L178.4 121.7 L180.0 120.1 L181.3 118.8 L182.8 118.2 L184.0 116.8 L185.9 115.7 L187.2 114.2 L188.4 113.2 L190.1 111.9 L191.4 110.7 L193.0 109.9 L194.2 108.4 L195.5 107.3 L197.0 106.1 L197.9 105.2 L198.9 103.8 L200.1 102.7 L201.3 101.5 L202.3 100.2 L203.6 98.8 L204.8 97.9 L205.8 96.4 L207.2 95.2 L208.4 94.1 L210.0 93.4 L211.6 92.0 L213.1 91.2 L214.8 90.1 L216.3 89.0 L218.4 88.6 L219.7 87.7 L221.9 86.7 L223.2 85.7 L225.1 84.6 L226.9 83.5 L228.8 83.0 L230.4 82.2 L232.2 80.7 L233.7 79.6 L235.4 79.0 L237.6 77.6 L239.1 76.8 L241.2 75.9 L242.6 74.8 L244.8 73.8 L246.3 72.5 L248.4 71.7 L249.9 71.0 L251.7 70.5 L253.4 69.3 L255.4 69.0 L257.3 68.5 L259.1 68.1 L260.7 67.2 L262.3 66.5 L264.3 65.9 L266.1 65.4 L267.8 65.6 L269.4 64.4 L271.4 64.1 L273.4 63.5 L275.3 63.7 L277.1 63.0 L278.7 62.8 L280.7 62.3 L282.5 61.9 L284.5 61.8 L286.4 61.1 L287.9 60.9 L289.7 60.5 L291.1 60.0 L292.8 60.0 L295.1 59.8 L297.1 59.3 L298.8 58.6 L300.4 57.7 L301.9 57.7 L303.3 57.2 L305.4 56.9 L307.1 56.5 L308.9 56.8 L310.8 56.2 L313.2 56.5 L315.1 56.7 L317.4 56.8 L319.7 56.9 L322.0 56.9 L324.1 56.9 L326.1 57.2 L327.4 57.5 L329.1 57.0 L331.0 57.2 L332.7 57.5 L334.4 57.7 L336.0 57.7 L338.0 57.5 L339.6 57.6 L341.9 58.2 L344.3 58.2 L346.4 57.7 L348.5 58.0 L349.8 58.0 L351.8 57.4 L353.7 57.6 L355.3 57.2 L357.0 57.3 L358.5 57.6 L360.2 58.2 L362.1 58.4 L364.2 59.1 L366.1 59.9 L367.9 60.5 L369.7 61.4 L371.0 61.9 L372.8 62.5 L375.9 63.5 L378.3 64.0 L381.3 65.2 L384.4 65.4 L386.1 65.7 L387.9 66.6 L389.7 66.9 L391.9 66.7 L393.7 67.2 L396.1 67.6 L397.7 67.7 L399.8 68.8 L401.9 69.4 L404.0 70.2 L406.2 70.8 L408.6 72.0 L410.6 73.2 L412.9 73.6 L414.8 74.7 L417.0 76.3 L419.3 76.6 L421.1 78.2 L423.6 78.9 L425.6 79.7 L427.3 80.6 L428.7 81.4 L429.8 81.9 L431.3 83.2 L432.9 83.4 L434.1 84.5 L435.7 85.7 L437.1 86.5 L438.3 87.7 L439.9 88.5 L441.4 90.3 L442.6 90.9 L444.4 92.2 L445.6 93.5 L447.0 94.8 L448.6 96.3 L450.2 96.8 L451.4 98.5 L453.1 99.6 L454.4 100.7 L455.8 101.6 L457.5 103.2 L459.1 104.2 L460.3 105.4 L461.9 106.4 L463.3 107.4 L464.7 108.6 L465.8 109.7 L467.2 111.2 L468.6 111.9 L470.1 113.4 L471.9 114.9 L473.1 116.9 L474.8 118.1 L476.2 119.5 L477.3 120.9 L478.6 122.5 L480.1 124.2 L481.3 125.6 L482.5 127.4 L483.0 128.7 L484.3 130.8 L486.7 132.1 L487.4 133.6 L486.0 135.2 L489.8 136.8 L491.0 138.3 L489.6 139.8 L492.6 141.2 L492.9 142.6 L495.5 144.1 L497.4 145.7 L497.0 147.5 L497.4 149.4 L499.6 151.0 L502.1 152.6 L501.5 154.2 L501.8 155.6 L503.2 157.0 L505.8 158.3 L504.2 159.7 L507.1 161.1 L507.3 162.5 L508.9 163.9 L507.5 165.3 L510.7 167.0 L511.0 168.6 L512.7 170.3 L511.2 172.3 L514.1 174.2 L515.2 175.9 L515.5 177.5 L515.9 179.2 L517.1 180.9 L519.5 182.9 L518.7 185.0 L521.0 186.7 L522.5 188.5 L523.2 190.2 L523.8 192.1 L524.5 194.1 L525.2 196.0 L525.2 197.6 L524.5 199.1 L524.9 200.6 L526.9 202.1 L526.3 204.1 L526.2 206.0 L527.8 208.0 L527.7 209.9 L528.4 211.8 L530.5 213.8 L528.3 215.7 L529.0 217.6 L531.3 219.6 L529.5 221.4 L531.0 223.2 L532.1 225.1 L531.7 226.7 L532.4 228.4 L531.1 230.0 L531.6 232.0 L533.4 234.0 L533.1 235.7 L534.0 237.4 L535.2 239.0 L534.0 240.5 L534.1 242.3 L535.5 244.0 L535.7 246.0 L536.6 247.9 L537.1 250.0 L536.4 252.1 L535.3 254.1 L537.7 256.2 L535.1 258.1 L536.8 260.0 L535.8 261.6 L536.4 263.2 L537.5 266.1 L535.8 269.2 L535.8 271.1 L537.3 273.0 L537.3 274.8 L535.1 276.5 L537.5 278.3 L535.8 280.4 L535.5 282.4 L536.0 284.5 L535.6 286.6 L534.2 288.6 L535.0 290.6 L535.4 292.9 L535.3 295.3 L532.6 298.1 L532.0 299.8 L532.8 300.9 L531.9 302.2 L531.4 303.7 L530.8 305.1 L532.4 306.6 L531.6 308.3 L533.6 310.6 L532.6 313.2 L531.5 315.7 L531.8 317.4" stroke="#cccc00" stroke-width="1.05"/><path d="M290.0 332.9 L290.7 332.2 L291.7 331.2 L292.9 330.1 L294.0 328.9 L294.7 327.6 L294.8 326.5 L294.2 325.5 L293.1 324.5 L291.6 323.6 L290.0 322.6 L288.4 321.4 L287.0 320.0 L285.8 318.3 L284.5 316.4 L283.3 314.3 L282.2 312.1 L281.3 310.0 L280.5 308.0 L279.9 306.1 L279.6 304.3 L279.3 302.6 L279.2 300.8 L279.2 298.9 L279.4 297.0 L279.6 294.9 L280.0 292.5 L280.5 290.2 L281.1 287.9 L281.9 285.8 L283.0 284.0 L284.4 282.5 L286.1 281.1 L288.0 279.9 L290.0 279.0 L291.8 278.4 L293.5 278.2 L295.0 278.4 L296.4 278.8 L297.7 279.6 L298.9 280.8 L300.0 282.2 L301.0 284.0 L301.9 286.3 L302.8 289.1 L303.5 292.3 L304.1 295.6 L304.5 298.8 L304.7 301.7 L304.6 304.4 L304.3 307.0 L303.7 309.6 L303.1 312.0 L302.5 314.2 L302.0 316.0 L301.5 317.4 L301.0 318.4 L300.4 319.2 L300.0 319.9 L299.7 320.6 L299.7 321.5 L300.0 322.6 L300.6 323.7 L301.4 324.9 L302.2 326.0 L303.1 327.1 L304.0 328.0 L304.8 328.8 L305.4 329.4 L306.1 330.0 L307.0 330.5 L308.1 331.0 L309.6 331.5 L311.5 332.0 L313.7 332.6 L316.2 333.1 L318.8 333.5 L321.6 333.8 L324.5 333.9 L327.6 333.8 L330.9 333.6 L334.4 333.3 L337.9 332.8 L341.2 332.2 L344.3 331.4 L347.1 330.5 L349.9 329.4 L352.5 328.2 L354.9 326.8 L357.1 325.4 L359.1 324.0 L360.8 322.5 L362.3 321.0 L363.6 319.5 L364.7 317.8 L365.7 316.0 L366.6 314.1 L367.4 312.0 L368.0 309.8 L368.5 307.4 L369.0 305.0 L369.4 302.5 L370.0 300.0 L370.7 297.4 L371.5 294.8 L372.3 292.1 L373.0 289.4 L373.6 286.7 L374.0 284.0 L374.2 281.3 L374.2 278.4 L374.1 275.6 L373.9 272.8 L373.5 270.3 L373.0 268.0 L372.3 266.0 L371.5 264.2 L370.5 262.6 L369.4 261.2 L368.2 260.0 L367.0 259.0 L365.7 258.2 L364.2 257.6 L362.7 257.2 L361.1 257.0 L359.5 256.9 L358.0 257.0 L356.4 257.3 L354.7 257.7 L353.1 258.3 L351.5 259.1 L350.1 260.0 L349.0 261.0 L348.2 262.3 L347.7 263.8 L347.3 265.5 L347.1 267.1 L347.0 268.5 L346.8 269.5" stroke="#cccc00" stroke-width="1.05"/><path d="M337.0 277.0 L336.9 278.5 L336.7 279.9 L336.4 281.3 L335.9 282.7 L335.3 284.0 L334.5 285.2 L333.7 286.4 L332.7 287.4 L331.6 288.3 L330.5 289.1 L329.3 289.8 L328.0 290.3 L326.7 290.7 L325.4 290.9 L324.0 291.0 L322.6 290.9 L321.3 290.7 L320.0 290.3 L318.7 289.8 L317.5 289.1 L316.4 288.3 L315.3 287.4 L314.3 286.4 L313.5 285.2 L312.7 284.0 L312.1 282.7 L311.6 281.3 L311.3 279.9 L311.1 278.5 L311.0 277.0 L311.1 275.5 L311.3 274.1 L311.6 272.7 L312.1 271.3 L312.7 270.0 L313.5 268.8 L314.3 267.6 L315.3 266.6 L316.4 265.7 L317.5 264.9 L318.7 264.2 L320.0 263.7 L321.3 263.3 L322.6 263.1 L324.0 263.0 L325.4 263.1 L326.7 263.3 L328.0 263.7 L329.3 264.2 L330.5 264.9 L331.6 265.7 L332.7 266.6 L333.7 267.6 L334.5 268.8 L335.3 270.0 L335.9 271.3 L336.4 272.7 L336.7 274.1 L336.9 275.5 L337.0 277.0" stroke="#cccc00" stroke-width="1.05"/><path d="M375.0 282.0 L374.9 284.6 L374.7 287.2 L374.3 289.7 L373.8 292.2 L373.1 294.5 L372.3 296.7 L371.4 298.7 L370.4 300.6 L369.2 302.2 L368.0 303.7 L366.7 304.8 L365.3 305.8 L363.9 306.5 L362.5 306.9 L361.0 307.0 L359.5 306.9 L358.1 306.5 L356.7 305.8 L355.3 304.8 L354.0 303.7 L352.8 302.2 L351.6 300.6 L350.6 298.7 L349.7 296.7 L348.9 294.5 L348.2 292.2 L347.7 289.7 L347.3 287.2 L347.1 284.6 L347.0 282.0 L347.1 279.4 L347.3 276.8 L347.7 274.3 L348.2 271.8 L348.9 269.5 L349.7 267.3 L350.6 265.3 L351.6 263.4 L352.8 261.8 L354.0 260.3 L355.3 259.2 L356.7 258.2 L358.1 257.5 L359.5 257.1 L361.0 257.0 L362.5 257.1 L363.9 257.5 L365.3 258.2 L366.7 259.2 L368.0 260.3 L369.2 261.8 L370.4 263.4 L371.4 265.3 L372.3 267.3 L373.1 269.5 L373.8 271.8 L374.3 274.3 L374.7 276.8 L374.9 279.4 L375.0 282.0" stroke="#cccc00" stroke-width="1.05"/><path d="M369.0 287.0 L368.9 288.6 L368.8 290.1 L368.5 291.6 L368.0 293.1 L367.5 294.5 L366.9 295.8 L366.2 297.0 L365.4 298.1 L364.5 299.1 L363.5 300.0 L362.5 300.7 L361.4 301.3 L360.3 301.7 L359.1 301.9 L358.0 302.0 L356.9 301.9 L355.7 301.7 L354.6 301.3 L353.5 300.7 L352.5 300.0 L351.5 299.1 L350.6 298.1 L349.8 297.0 L349.1 295.8 L348.5 294.5 L348.0 293.1 L347.5 291.6 L347.2 290.1 L347.1 288.6 L347.0 287.0 L347.1 285.4 L347.2 283.9 L347.5 282.4 L348.0 280.9 L348.5 279.5 L349.1 278.2 L349.8 277.0 L350.6 275.9 L351.5 274.9 L352.5 274.0 L353.5 273.3 L354.6 272.7 L355.7 272.3 L356.9 272.1 L358.0 272.0 L359.1 272.1 L360.3 272.3 L361.4 272.7 L362.5 273.3 L363.5 274.0 L364.5 274.9 L365.4 275.9 L366.2 277.0 L366.9 278.2 L367.5 279.5 L368.0 280.9 L368.5 282.4 L368.8 283.9 L368.9 285.4 L369.0 287.0" stroke="#cccc00" stroke-width="1.05"/><path d="M358.0 312.0 L357.9 313.5 L357.5 314.9 L357.0 316.3 L356.2 317.7 L355.2 319.0 L354.0 320.2 L352.6 321.4 L351.1 322.4 L349.3 323.3 L347.5 324.1 L345.5 324.8 L343.5 325.3 L341.4 325.7 L339.2 325.9 L337.0 326.0 L334.8 325.9 L332.6 325.7 L330.5 325.3 L328.5 324.8 L326.5 324.1 L324.7 323.3 L322.9 322.4 L321.4 321.4 L320.0 320.2 L318.8 319.0 L317.8 317.7 L317.0 316.3 L316.5 314.9 L316.1 313.5 L316.0 312.0 L316.1 310.5 L316.5 309.1 L317.0 307.7 L317.8 306.3 L318.8 305.0 L320.0 303.8 L321.4 302.6 L322.9 301.6 L324.7 300.7 L326.5 299.9 L328.5 299.2 L330.5 298.7 L332.6 298.3 L334.8 298.1 L337.0 298.0 L339.2 298.1 L341.4 298.3 L343.5 298.7 L345.5 299.2 L347.5 299.9 L349.3 300.7 L351.1 301.6 L352.6 302.6 L354.0 303.8 L355.2 305.0 L356.2 306.3 L357.0 307.7 L357.5 309.1 L357.9 310.5 L358.0 312.0" stroke="#cccc00" stroke-width="1.05"/><path d="M358.5 307.0 L358.3 307.3 L358.1 307.6 L357.9 307.9 L357.7 308.2 L357.5 308.5 L357.3 308.8 L357.0 309.0 L356.8 309.3 L356.5 309.6 L356.3 309.9 L356.0 310.2 L355.8 310.4 L355.5 310.7 L355.2 311.0 L354.9 311.2 L354.6 311.5 L354.3 311.7 L354.0 312.0 L353.7 312.2 L353.4 312.4 L353.1 312.7 L352.8 312.9 L352.4 313.1 L352.1 313.3 L351.7 313.5 L351.4 313.7 L351.1 313.9 L350.7 314.1 L350.3 314.3 L350.0 314.5 L349.6 314.7 L349.2 314.8 L348.9 315.0 L348.5 315.2 L348.1 315.3 L347.7 315.5 L347.3 315.6 L346.9 315.7 L346.6 315.8 L346.2 316.0 L345.8 316.1 L345.4 316.2 L344.9 316.3 L344.5 316.4 L344.1 316.5 L343.7 316.5 L343.3 316.6 L342.9 316.7 L342.5 316.7 L342.1 316.8 L341.7 316.8 L341.2 316.9 L340.8 316.9 L340.4 316.9 L340.0 316.9 L339.6 316.9 L339.1 316.9 L338.7 316.9 L338.3 316.9 L337.9 316.9 L337.5 316.9 L337.1 316.8 L336.6 316.8 L336.2 316.7 L335.8 316.7 L335.4 316.6 L335.0 316.6 L334.6 316.5 L334.2 316.4 L333.8 316.3 L333.4 316.2 L333.0 316.1 L332.6 316.0 L332.2 315.9 L331.8 315.8 L331.4 315.6 L331.0 315.5 L330.6 315.4 L330.3 315.2 L329.9 315.1 L329.5 314.9 L329.2 314.7 L328.8 314.6 L328.4 314.4 L328.1 314.2 L327.7 314.0 L327.4 313.8 L327.0 313.6 L326.7 313.4 L326.4 313.2 L326.1 313.0 L325.7 312.8 L325.4 312.6 L325.1 312.3 L324.8 312.1 L324.5 311.9 L324.2 311.6 L323.9 311.4 L323.7 311.1 L323.4 310.9 L323.1 310.6 L322.9 310.4 L322.6 310.1 L322.4 309.8 L322.1 309.6 L321.9 309.3 L321.6 309.0 L321.4 308.7 L321.2 308.4 L321.0 308.1 L320.8 307.9 L320.6 307.6 L320.4 307.3 L320.2 307.0 L320.1 306.7 L319.9 306.4 L319.7 306.1 L319.6 305.8 L319.4 305.5 L319.3 305.2 L319.2 304.9 L319.0 304.5 L318.9 304.2 L318.8 303.9 L318.7 303.6 L318.6 303.3 L318.5 303.0 L318.5 302.7 L318.4 302.4 L318.3 302.1 L318.3 301.8 L318.2 301.5 L318.2 301.1 L318.1 300.8 L318.1 300.5 L318.1 300.2 L318.1 299.9 L318.1 299.6 L318.1 299.3 L318.1 299.0 L318.1 298.7 L318.1 298.4 L318.1 298.1 L318.2 297.8 L318.2 297.5 L318.2 297.3 L318.3 297.0 L318.4 296.7 L318.4 296.4 L318.5 296.1 L318.6 295.9 L318.7 295.6 L318.8 295.3 L318.8 295.1 L318.9 294.8 L319.1 294.6 L319.2 294.3 L319.3 294.1 L319.4 293.8 L319.5 293.6 L319.7 293.4 L319.8 293.1 L320.0 292.9 L320.1 292.7 L320.3 292.5 L320.4 292.3 L320.6 292.0 L320.8 291.8 L320.9 291.6 L321.1 291.5 L321.3 291.3 L321.5 291.1 L321.7 290.9 L321.9 290.7 L322.1 290.6 L322.3 290.4 L322.5 290.3 L322.7 290.1 L322.9 290.0 L323.1 289.8 L323.3 289.7 L323.5 289.6 L323.7 289.5 L323.9 289.3 L324.2 289.2 L324.4 289.1 L324.6 289.0 L324.8 288.9 L325.1 288.9 L325.3 288.8 L325.5 288.7 L325.8 288.6 L326.0 288.6 L326.2 288.5 L326.5 288.5 L326.7 288.4 L326.9 288.4 L327.2 288.4 L327.4 288.4 L327.6 288.3 L327.9 288.3 L328.1 288.3 L328.3 288.3 L328.5 288.3 L328.8 288.3 L329.0 288.3 L329.2 288.4 L329.5 288.4 L329.7 288.4 L329.9 288.5 L330.1 288.5 L330.3 288.6 L330.5 288.6 L330.8 288.7 L331.0 288.7 L331.2 288.8 L331.4 288.9 L331.6 289.0 L331.8 289.1 L332.0 289.2 L332.2 289.3 L332.4 289.4 L332.5 289.5 L332.7 289.6 L332.9 289.7 L333.1 289.8 L333.2 289.9 L333.4 290.1 L333.6 290.2 L333.7 290.3 L333.9 290.5 L334.0 290.6 L334.2 290.8 L334.3 290.9 L334.4 291.1 L334.6 291.2 L334.7 291.4 L334.8 291.5 L334.9 291.7 L335.0 291.9 L335.1 292.0 L335.2 292.2 L335.3 292.4 L335.4 292.6 L335.5 292.7 L335.6 292.9 L335.6 293.1 L335.7 293.3 L335.8 293.5 L335.8 293.7 L335.9 293.9 L335.9 294.1 L335.9 294.3 L336.0 294.4 L336.0 294.6 L336.0 294.8 L336.0 295.0 L336.0 295.2 L336.0 295.4 L336.0 295.6 L336.0 295.8 L336.0 296.0 L336.0 296.2 L335.9 296.4 L335.9 296.6 L335.9 296.8 L335.8 297.0 L335.8 297.2 L335.7 297.4 L335.6 297.6 L335.6 297.7 L335.5 297.9 L335.4 298.1 L335.3 298.3 L335.2 298.5 L335.1 298.7 L335.0 298.8 L334.9 299.0 L334.8 299.2 L334.7 299.3 L334.6 299.5 L334.4 299.7 L334.3 299.8 L334.2 300.0 L334.0 300.1 L333.9 300.3 L333.7 300.4 L333.6 300.6 L333.4 300.7 L333.2 300.9 L333.0 301.0 L332.9 301.1 L332.7 301.2 L332.5 301.4 L332.3 301.5 L332.1 301.6 L331.9 301.7 L331.7 301.8 L331.5 301.9 L331.3 302.0 L331.1 302.1 L330.9 302.1 L330.7 302.2 L330.5 302.3 L330.2 302.3 L330.0 302.4 L329.8 302.5 L329.6 302.5 L329.3 302.6 L329.1 302.6 L328.9 302.6 L328.6 302.7 L328.4 302.7 L328.2 302.7 L327.9 302.7 L327.7 302.7 L327.4 302.7 L327.2 302.7 L326.9 302.7 L326.7 302.7 L326.5 302.6 L326.2 302.6 L326.0 302.6 L325.7 302.5 L325.5 302.5 L325.2 302.4 L325.0 302.3 L324.7 302.3 L324.5 302.2 L324.3 302.1 L324.0 302.0 L323.8 301.9 L323.5 301.8 L323.3 301.7 L323.1 301.6 L322.8 301.5 L322.6 301.4 L322.4 301.3 L322.2 301.1 L321.9 301.0 L321.7 300.8 L321.5 300.7 L321.3 300.5 L321.1 300.4 L320.9 300.2 L320.7 300.0 L320.5 299.8 L320.3 299.7 L320.1 299.5 L319.9 299.3 L319.7 299.1 L319.5 298.9 L319.3 298.7 L319.2 298.4 L319.0 298.2 L318.8 298.0 L318.7 297.8 L318.5 297.5 L318.4 297.3 L318.2 297.1 L318.1 296.8 L318.0 296.6 L317.9 296.3 L317.7 296.0 L317.6 295.8 L317.5 295.5 L317.4 295.2 L317.3 295.0 L317.2 294.7 L317.1 294.4 L317.1 294.1 L317.0 293.8 L316.9 293.5 L316.9 293.3 L316.8 293.0 L316.8 292.7 L316.7 292.4 L316.7 292.1 L316.7 291.8 L316.7 291.5 L316.7 291.1 L316.7 290.8 L316.7 290.5 L316.7 290.2 L316.7 289.9 L316.7 289.6 L316.7 289.3 L316.8 288.9 L316.8 288.6 L316.9 288.3 L317.0 288.0 L317.0 287.7 L317.1 287.4 L317.2 287.0 L317.3 286.7 L317.4 286.4 L317.5 286.1 L317.6 285.8 L317.7 285.5 L317.8 285.1 L318.0 284.8 L318.1 284.5 L318.3 284.2 L318.4 283.9 L318.6 283.6 L318.8 283.3 L319.0 283.0 L319.1 282.7 L319.3 282.4 L319.5 282.1 L319.7 281.8 L320.0 281.5 L320.2 281.2 L320.4 280.9 L320.6 280.6 L320.9 280.4 L321.1 280.1 L321.4 279.8 L321.7 279.6 L321.9 279.3 L322.2 279.0 L322.5 278.8 L322.8 278.5 L323.0 278.3 L323.3 278.0 L323.6 277.8 L324.0 277.6 L324.3 277.3 L324.6 277.1 L324.9 276.9 L325.2 276.7 L325.6 276.5 L325.9 276.3 L326.3 276.1 L326.6 275.9 L327.0 275.7 L327.3 275.5 L327.7 275.3 L328.1 275.1 L328.4 275.0 L328.8 274.8 L329.2 274.7 L329.6 274.5 L329.9 274.4 L330.3 274.3 L330.7 274.1 L331.1 274.0 L331.5 273.9 L331.9 273.8 L332.3 273.7 L332.7 273.6 L333.1 273.5 L333.5 273.4 L333.9 273.4 L334.4 273.3 L334.8 273.2 L335.2 273.2 L335.6 273.1 L336.0 273.1 L336.4 273.1 L336.9 273.0 L337.3 273.0 L337.7 273.0 L338.1 273.0 L338.5 273.0 L339.0 273.0 L339.4 273.0 L339.8 273.1 L340.2 273.1 L340.6 273.1 L341.0 273.2 L341.5 273.2 L341.9 273.3 L342.3 273.3 L342.7 273.4 L343.1 273.5 L343.5 273.6 L343.9 273.7 L344.3 273.8 L344.7 273.9 L345.1 274.0 L345.5 274.1 L345.9 274.2 L346.3 274.4 L346.7 274.5 L347.1 274.7 L347.4 274.8 L347.8 275.0 L348.2 275.1 L348.6 275.3 L348.9 275.5 L349.3 275.7 L349.6 275.8 L350.0 276.0 L350.3 276.2 L350.7 276.4 L351.0 276.6 L351.3 276.9 L351.7 277.1 L352.0 277.3 L352.3 277.5 L352.6 277.8 L352.9 278.0 L353.2 278.2 L353.5 278.5 L353.8 278.7 L354.1 279.0 L354.4 279.3 L354.6 279.5 L354.9 279.8 L355.2 280.1 L355.4 280.3 L355.6 280.6 L355.9 280.9 L356.1 281.2 L356.3 281.5 L356.6 281.8 L356.8 282.1 L357.0 282.4 L357.2 282.7 L357.4 283.0 L357.5 283.3 L357.7 283.6 L357.9 283.9 L358.0 284.2 L358.2 284.5 L358.3 284.8 L358.5 285.1 L358.6 285.4 L358.7 285.8 L358.8 286.1 L359.0 286.4 L359.1 286.7 L359.1 287.0 L359.2 287.4 L359.3 287.7 L359.4 288.0 L359.4 288.3 L359.5 288.6 L359.6 289.0 L359.6 289.3 L359.6 289.6 L359.7 289.9 L359.7 290.2 L359.7 290.5 L359.7 290.9 L359.7 291.2 L359.7 291.5 L359.7 291.8 L359.7 292.1 L359.6 292.4 L359.6 292.7 L359.5 293.0 L359.5 293.3 L359.4 293.6 L359.4 293.9 L359.3 294.2 L359.2 294.5 L359.1 294.8 L359.1 295.0 L359.0 295.3 L358.9 295.6 L358.7 295.9 L358.6 296.1 L358.5 296.4 L358.4 296.6 L358.3 296.9 L358.1 297.2 L358.0 297.4 L357.8 297.6 L357.7 297.9 L357.5 298.1 L357.4 298.3 L357.2 298.6 L357.0 298.8 L356.8 299.0 L356.7 299.2 L356.5 299.4 L356.3 299.6 L356.1 299.8 L355.9 300.0 L355.7 300.2 L355.5 300.4 L355.3 300.5 L355.1 300.7 L354.9 300.9 L354.6 301.0 L354.4 301.2 L354.2 301.3 L354.0 301.4 L353.7 301.6 L353.5 301.7 L353.3 301.8 L353.0 301.9 L352.8 302.1 L352.6 302.2 L352.3 302.3 L352.1 302.3 L351.8 302.4 L351.6 302.5 L351.3 302.6 L351.1 302.6 L350.8 302.7 L350.6 302.8 L350.3 302.8 L350.1 302.8 L349.9 302.9 L349.6 302.9 L349.4 302.9 L349.1 303.0 L348.9 303.0 L348.6 303.0 L348.4 303.0 L348.1 303.0 L347.9 303.0 L347.6 302.9 L347.4 302.9 L347.2 302.9 L346.9 302.9 L346.7 302.8 L346.5 302.8 L346.2 302.7 L346.0 302.7 L345.8 302.6 L345.5 302.5 L345.3 302.5 L345.1 302.4 L344.9 302.3 L344.7 302.2 L344.5 302.1 L344.3 302.0 L344.1 301.9 L343.9 301.8 L343.7 301.7 L343.5 301.6 L343.3 301.5 L343.1 301.3 L342.9 301.2 L342.8 301.1 L342.6 300.9 L342.4 300.8 L342.3 300.7 L342.1 300.5 L342.0 300.4 L341.8 300.2 L341.7 300.1 L341.5 299.9 L341.4 299.7 L341.3 299.6 L341.2 299.4 L341.1 299.2 L340.9 299.0 L340.8 298.9 L340.7 298.7 L340.6 298.5 L340.6 298.3 L340.5 298.1 L340.4 297.9 L340.3 297.8 L340.3 297.6 L340.2 297.4 L340.2 297.2 L340.1 297.0 L340.1 296.8 L340.0 296.6 L340.0 296.4 L340.0 296.2 L340.0 296.0 L339.9 295.8 L339.9 295.6 L339.9 295.4 L339.9 295.2 L340.0 295.0 L340.0 294.8 L340.0 294.6 L340.0 294.5 L340.1 294.3 L340.1 294.1 L340.1 293.9 L340.2 293.7 L340.3 293.5 L340.3 293.3 L340.4 293.1 L340.5 293.0 L340.5 292.8 L340.6 292.6 L340.7 292.4 L340.8 292.2 L340.9 292.1 L341.0 291.9 L341.1 291.7 L341.3 291.6 L341.4 291.4 L341.5 291.3 L341.6 291.1 L341.8 291.0 L341.9 290.8 L342.1 290.7 L342.2 290.5 L342.4 290.4 L342.5 290.3 L342.7 290.1 L342.9 290.0 L343.0 289.9 L343.2 289.8 L343.4 289.7 L343.6 289.6 L343.8 289.5 L344.0 289.4 L344.1 289.3 L344.3 289.2 L344.5 289.1 L344.7 289.1 L344.9 289.0 L345.2 288.9 L345.4 288.9 L345.6 288.8 L345.8 288.8 L346.0 288.7 L346.2 288.7 L346.4 288.6 L346.7 288.6 L346.9 288.6 L347.1 288.6 L347.3 288.6 L347.6 288.6 L347.8 288.6 L348.0 288.6 L348.3 288.6 L348.5 288.6 L348.7 288.6 L348.9 288.7 L349.2 288.7 L349.4 288.8 L349.6 288.8 L349.9 288.9 L350.1 288.9 L350.3 289.0 L350.5 289.1 L350.8 289.1 L351.0 289.2 L351.2 289.3 L351.4 289.4 L351.7 289.5 L351.9 289.6 L352.1 289.7 L352.3 289.9 L352.5 290.0 L352.7 290.1 L352.9 290.3 L353.1 290.4 L353.3 290.6 L353.5 290.7 L353.7 290.9 L353.9 291.0 L354.1 291.2 L354.3 291.4 L354.5 291.6 L354.7 291.8 L354.8 291.9 L355.0 292.1 L355.2 292.3 L355.3 292.6 L355.5 292.8 L355.6 293.0 L355.8 293.2 L355.9 293.4 L356.0 293.7 L356.2 293.9 L356.3 294.1 L356.4 294.4 L356.5 294.6 L356.6 294.9 L356.7 295.1 L356.8 295.4 L356.9 295.6 L357.0 295.9 L357.1 296.2 L357.2 296.5 L357.2 296.7 L357.3 297.0 L357.4 297.3 L357.4 297.6 L357.4 297.9 L357.5 298.1 L357.5 298.4 L357.5 298.7 L357.5 299.0 L357.6 299.3 L357.6 299.6 L357.6 299.9 L357.5 300.2 L357.5 300.5 L357.5 300.8 L357.5 301.1 L357.4 301.4 L357.4 301.7 L357.3 302.0 L357.2 302.4 L357.2 302.7 L357.1 303.0 L357.0 303.3 L356.9 303.6 L356.8 303.9 L356.7 304.2 L356.6 304.5 L356.5 304.8 L356.4 305.1 L356.2 305.4 L356.1 305.7 L355.9 306.0 L355.8 306.3 L355.6 306.6 L355.4 306.9 L355.3 307.2 L355.1 307.5 L354.9 307.8 L354.7 308.1 L354.5 308.4 L354.3 308.7 L354.0 308.9 L353.8 309.2 L353.6 309.5 L353.3 309.8 L353.1 310.0 L352.8 310.3 L352.6 310.6 L352.3 310.8 L352.0 311.1 L351.8 311.3 L351.5 311.6 L351.2 311.8 L350.9 312.0 L350.6 312.3 L350.3 312.5 L350.0 312.7 L349.7 312.9 L349.3 313.2 L349.0 313.4 L348.7 313.6 L348.3 313.8 L348.0 314.0 L347.7 314.1 L347.3 314.3 L346.9 314.5 L346.6 314.7 L346.2 314.8 L345.9 315.0 L345.5 315.2 L345.1 315.3 L344.7 315.4 L344.3 315.6 L344.0 315.7 L343.6 315.8 L343.2 315.9 L342.8 316.1 L342.4 316.2 L342.0 316.3 L341.6 316.3 L341.2 316.4 L340.8 316.5 L340.4 316.6 L339.9 316.6 L339.5 316.7 L339.1 316.7 L338.7 316.8 L338.3 316.8 L337.9 316.8 L337.5 316.9 L337.0 316.9 L336.6 316.9 L336.2 316.9 L335.8 316.9 L335.4 316.9 L335.0 316.8 L334.5 316.8 L334.1 316.8 L333.7 316.7 L333.3 316.7 L332.9 316.6 L332.5 316.6 L332.0 316.5 L331.6 316.4 L331.2 316.3 L330.8 316.3 L330.4 316.2 L330.0 316.1 L329.6 315.9 L329.2 315.8 L328.8 315.7 L328.4 315.6 L328.0 315.4 L327.7 315.3 L327.3 315.1 L326.9 315.0 L326.5 314.8 L326.2 314.7 L325.8 314.5 L325.4 314.3 L325.1 314.1" stroke="#cccc00" stroke-width="1.05"/>
 </g>
 <!-- markers -->
 <path d="M191.6 97.2 L199.2 108.2 L191.6 119.3 L184.1 108.2 Z" fill="#00e000"/>
 <text x="197.8" y="102.4" style="font-family:'Liberation Sans';font-size:14px;font-weight:bold;fill:#f4f4f4;">1</text>
 <path d="M338.7 270.5 L346.2 281.6 L338.7 292.7 L331.2 281.6 Z" fill="#000" stroke="#10b010" stroke-width="1.5"/>
 <text x="344.6" y="275.2" style="font-family:'Liberation Sans';font-size:14px;font-weight:bold;fill:#f4f4f4;">1</text>
 <path d="M68 270 L77 270 L72.5 279 Z" fill="#e000e0" transform="rotate(180 72.5 274.5)"/>
</svg>

<div class="a" style="left:380px;top:46px;font-size:11.5px;color:#e000e0;">&gt;</div>
<div class="a" style="left:392px;top:46px;font-size:11.5px;color:#e000e0;">M1</div>
<div class="a" style="left:419px;top:46px;font-size:11.5px;color:#e000e0;">2.98 GHz</div>
<div class="a" style="left:531px;top:46px;font-size:11.5px;color:#e000e0;">33.67 dB</div>

<div class="a" style="left:66px;top:508px;font-size:11.8px;color:#e8e8e8;">Start&nbsp; 2 GHz</div>
<div class="a" style="left:304px;top:508px;font-size:11px;color:#e8e8e8;">Points</div><div class="a" style="left:343.5px;top:508px;font-size:11px;color:#e8e8e8;">1001</div>
<div class="a" style="left:516px;top:508px;font-size:11.5px;color:#e8e8e8;">Stop</div><div class="a" style="left:546px;top:508px;font-size:11.5px;color:#e8e8e8;">6 GHz</div>

<div id="panel">
 <div class="btn" style="top:0;height:35px;"></div>
 <div style="position:absolute;left:12px;top:10.8px;width:2.5px;height:2.5px;border-radius:50%;background:#1a88d8;"></div>
 <div style="position:absolute;left:12px;top:15.8px;width:2.5px;height:2.5px;border-radius:50%;background:#1a88d8;"></div>
 <div style="position:absolute;left:12px;top:20.8px;width:2.5px;height:2.5px;border-radius:50%;background:#1a88d8;"></div>
 <div class="bt" style="top:10.5px;left:1px;">Marker</div>

 <div class="btn" style="top:37px;height:59px;"></div>
 <div class="bt" style="top:50.5px;">Select Marker</div>
 <div class="bs" style="top:81px;left:-2px;">Marker 1</div>
 <div class="tri" style="top:84px;"></div>

 <div class="btn" style="top:98px;height:59px;"></div>
 <div class="bt" style="top:112px;">Select Trace</div>
 <div class="bs" style="top:142px;left:-2px;">Trace 2</div>
 <div class="tri" style="top:145px;"></div>

 <div class="btn" style="top:159px;height:59px;"></div>
 <div class="bt" style="top:173px;">Marker Type</div>
 <div class="bs" style="top:203px;left:-2px;">Normal</div>
 <div class="tri" style="top:206px;"></div>

 <div class="btn sel" style="top:220px;height:60px;"></div>
 <div class="bt" style="top:236px;">Marker Freq</div>
 <div class="bs" style="top:265px;">2.98 GHz</div>

 <div class="btn" style="top:282px;height:59px;"></div>
 <div class="bt" style="top:305px;left:-0.7px;">Peak</div>

 <div class="btn" style="top:343px;height:59px;"></div>
 <div class="bt" style="top:366px;left:-3.5px;">Marker To</div>
 <svg style="position:absolute;left:100px;top:364px" width="14" height="18"><path d="M4.8 4.5 L9 9.5 L4.8 14.5" fill="none" stroke="#8c8c8c" stroke-width="1.3"/></svg>

 <div class="btn" style="top:404px;height:59px;"></div>
 <div class="btn" style="top:465px;height:60px;"></div>
</div>

<!-- logo -->
<div style="position:absolute;left:573px;top:485px;width:121px;height:36px;background:#fdfdfd;overflow:hidden;">
 <svg style="position:absolute;left:0;top:0" width="30" height="36">
  <defs><linearGradient id="lg1" x1="0" y1="0" x2="0" y2="1"><stop offset="0" stop-color="#000"/><stop offset="0.8" stop-color="#111"/><stop offset="1" stop-color="#ccc"/></linearGradient></defs>
  <path d="M2 1.4 H8 C9.5 5 11.3 12 11.6 21.5 H11 C9.5 12 6.5 6 2 3.6 Z" fill="url(#lg1)"/>
  <path d="M11 1.4 H15.5 L14.6 21.5 H12.2 Z" fill="url(#lg1)"/>
  <path d="M25.3 1.4 H19.7 C18.3 5 16.2 12 15.6 21.5 H16.2 C17.8 12 21 6 25.3 3.6 Z" fill="url(#lg1)"/>
  <rect x="10.5" y="22" width="6" height="4" fill="#e0e0e0"/>
 </svg>
 <div class="a" style="left:27.6px;top:0.5px;font-size:6px;font-weight:bold;color:#222;transform:scaleX(0.875);transform-origin:0 0;">ЦЕНТР ИЗМЕРИТЕЛЬНОЙ ТЕХНИКИ</div>
 <div class="a" style="left:30px;top:6px;font-size:19px;font-weight:bold;letter-spacing:1.3px;background:linear-gradient(#eea000,#ffc010 55%,#ffe080);-webkit-background-clip:text;color:transparent;">ЭТАЛ</div>
 <div style="position:absolute;left:89px;top:8px;width:16.5px;height:14px;border-radius:50%;background:linear-gradient(#f2a800,#ffd030);"></div>
 <div style="position:absolute;left:88.5px;top:14px;width:17.5px;height:2.5px;background:#6a6a6a;border-radius:1px;"></div>
 <div class="a" style="left:107px;top:6px;font-size:19px;font-weight:bold;background:linear-gradient(#eea000,#ffc010 55%,#ffe080);-webkit-background-clip:text;color:transparent;">Н</div>
 <div style="position:absolute;left:30px;top:22px;width:90px;height:4px;background:linear-gradient(rgba(255,215,100,0.35),rgba(255,255,255,0));"></div>
 <div class="a" style="left:3.5px;top:27px;font-size:9px;color:#383838;-webkit-text-stroke:0.35px #383838;transform:scaleX(0.97);transform-origin:0 0;">ТЕРРИТОРИЯ ИЗМЕРЕНИЙ</div>
</div>
</body></html>
